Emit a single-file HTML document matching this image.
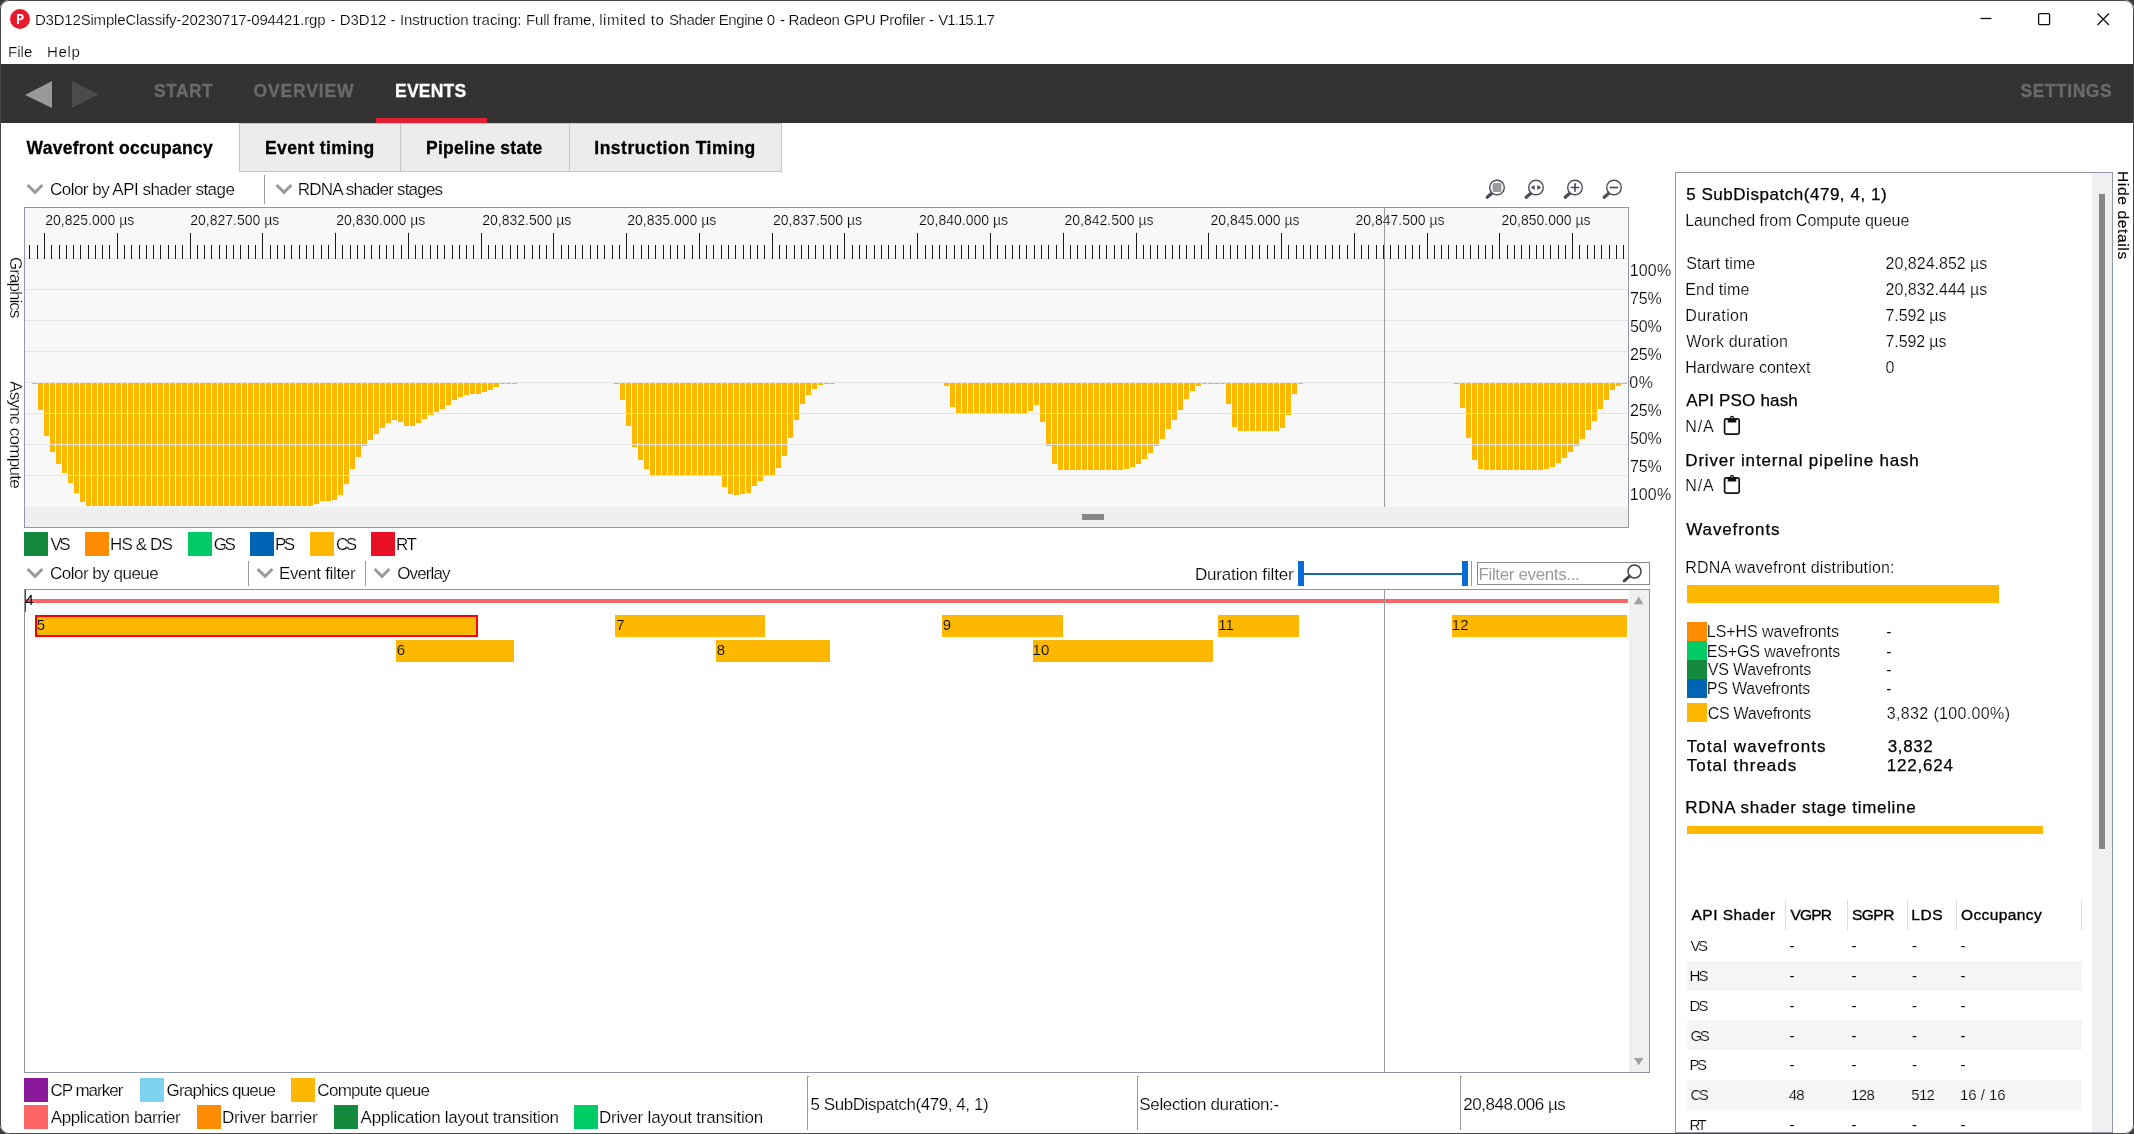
<!DOCTYPE html><html><head><meta charset="utf-8"><title>Radeon GPU Profiler</title><style>
html,body{margin:0;padding:0;}
body{width:2134px;height:1134px;overflow:hidden;background:#3a3a3a;font-family:"Liberation Sans",sans-serif;}
#win{position:absolute;left:0;top:0;width:2134px;height:1134px;background:#fff;border-radius:9px 9px 9px 9px;overflow:hidden;}
#win:after{content:"";position:absolute;left:0;top:0;right:0;bottom:0;border:1px solid #484848;border-radius:9px;pointer-events:none;z-index:50;}
.t{position:absolute;white-space:nowrap;line-height:normal;color:#000;}
#tx{position:absolute;left:0;top:0;width:2134px;height:1134px;will-change:transform;}
.b{position:absolute;}
.sq{position:absolute;width:24px;height:24px;}
.v{transform-origin:0 0;transform:rotate(90deg);}
</style></head><body><div id="win">
<svg class="b" style="left:9px;top:8px" width="22" height="22" viewBox="0 0 22 22"><circle cx="11" cy="11" r="10" fill="#e8192c"/><path d="M8 6h3.6a3.1 3.1 0 0 1 0 6.2H10V16H8z M10 7.8v2.6h1.4a1.3 1.3 0 0 0 0-2.6z" fill="#fff" fill-rule="evenodd"/></svg>
<svg class="b" style="left:1970px;top:4px" width="150" height="30" viewBox="0 0 150 30" fill="none" stroke="#111" stroke-width="1.3"><path d="M10.5 14.5h11"/><rect x="68.6" y="9.6" width="11" height="11" rx="1"/><path d="M127.5 9.5l11.5 11.5M139 9.5l-11.5 11.5"/></svg>
<div class="b" style="left:0;top:64px;width:2134px;height:59px;background:#333"></div>
<svg class="b" style="left:20px;top:76px" width="90" height="38" viewBox="0 0 90 38"><path d="M5 19L32 5v27z" fill="#999"/><path d="M78.5 18.5L52 5v27z" fill="#4b4b4b"/></svg>
<div class="b" style="left:376px;top:118px;width:111px;height:5px;background:#e0202f"></div>
<div class="b" style="left:239px;top:123px;width:543px;height:49px;background:#ececec;border:1px solid #c6c6c6;box-sizing:border-box"></div>
<div class="b" style="left:400px;top:123px;width:1px;height:49px;background:#c6c6c6"></div>
<div class="b" style="left:569px;top:123px;width:1px;height:49px;background:#c6c6c6"></div>
<svg class="b" style="left:26px;top:183px" width="18" height="13" viewBox="0 0 18 13"><path d="M1.6 2L9 9.4L16.4 2" fill="none" stroke="#9a9aa0" stroke-width="3"/></svg>
<svg class="b" style="left:274.5px;top:183px" width="18" height="13" viewBox="0 0 18 13"><path d="M1.6 2L9 9.4L16.4 2" fill="none" stroke="#9a9aa0" stroke-width="3"/></svg>
<div class="b" style="left:264px;top:175px;width:1px;height:29px;background:#9a9a9a"></div>
<svg class="b" style="left:1483.8px;top:176px" width="26" height="26" viewBox="0 0 26 26"><path d="M7.8 17.2L3.2 21.3" stroke="#4a4f5a" stroke-width="3.2" stroke-linecap="round" fill="none"/><circle cx="13" cy="11.5" r="7.3" fill="#fff" stroke="#4a4f5a" stroke-width="1.4"/><rect x="8.6" y="7.1" width="8.8" height="8.8" rx="1.5" fill="#9b9b9b"/></svg>
<svg class="b" style="left:1522.8px;top:176px" width="26" height="26" viewBox="0 0 26 26"><path d="M7.8 17.2L3.2 21.3" stroke="#4a4f5a" stroke-width="3.2" stroke-linecap="round" fill="none"/><circle cx="13" cy="11.5" r="7.3" fill="#fff" stroke="#4a4f5a" stroke-width="1.4"/><path d="M7.7 11.5l4-2.6v5.2zM18.3 11.5l-4-2.6v5.2z" fill="#4a4f5a"/></svg>
<svg class="b" style="left:1561.8px;top:176px" width="26" height="26" viewBox="0 0 26 26"><path d="M7.8 17.2L3.2 21.3" stroke="#4a4f5a" stroke-width="3.2" stroke-linecap="round" fill="none"/><circle cx="13" cy="11.5" r="7.3" fill="#fff" stroke="#4a4f5a" stroke-width="1.4"/><path d="M8.7 11.5h8.6M13 7.2v8.6" stroke="#4a4f5a" stroke-width="1.7" fill="none"/></svg>
<svg class="b" style="left:1600.7px;top:176px" width="26" height="26" viewBox="0 0 26 26"><path d="M7.8 17.2L3.2 21.3" stroke="#4a4f5a" stroke-width="3.2" stroke-linecap="round" fill="none"/><circle cx="13" cy="11.5" r="7.3" fill="#fff" stroke="#4a4f5a" stroke-width="1.4"/><path d="M8.7 11.5h8.6" stroke="#4a4f5a" stroke-width="1.7" fill="none"/></svg>
<div class="b" style="left:24px;top:207px;width:1605px;height:321px;box-sizing:border-box;border:1px solid #8f98a5;background:#f8f8f8"></div>
<div class="b" style="left:25px;top:507px;width:1603px;height:20px;background:#efefef"></div>
<div class="b" style="left:1082px;top:514px;width:22px;height:6px;background:#878787"></div>
<svg class="b" style="left:24px;top:207px" width="1605" height="320" viewBox="0 0 1605 320" shape-rendering="crispEdges"><path d="M8 176h5V177h-5zM14 176h5V203h-5zM20 176h5V229h-5zM26 176h5V245h-5zM32 176h5V257h-5zM38 176h5V266h-5zM44 176h5V276h-5zM50 176h5V286h-5zM56 176h5V295h-5zM62 176h5V299h-5zM68 176h5V299h-5zM74 176h5V299h-5zM80 176h5V299h-5zM86 176h5V299h-5zM92 176h5V299h-5zM98 176h5V299h-5zM104 176h5V299h-5zM110 176h5V299h-5zM116 176h5V299h-5zM122 176h5V299h-5zM128 176h5V299h-5zM134 176h5V299h-5zM140 176h5V299h-5zM146 176h5V299h-5zM152 176h5V299h-5zM158 176h5V299h-5zM164 176h5V299h-5zM170 176h5V299h-5zM176 176h5V299h-5zM182 176h5V299h-5zM188 176h5V299h-5zM194 176h5V299h-5zM200 176h5V299h-5zM206 176h5V299h-5zM212 176h5V299h-5zM218 176h5V299h-5zM224 176h5V299h-5zM230 176h5V299h-5zM236 176h5V299h-5zM242 176h5V299h-5zM248 176h5V299h-5zM254 176h5V299h-5zM260 176h5V299h-5zM266 176h5V299h-5zM272 176h5V299h-5zM278 176h5V299h-5zM284 176h5V299h-5zM290 176h5V297h-5zM296 176h5V294h-5zM302 176h5V294h-5zM308 176h5V293h-5zM314 176h5V288h-5zM320 176h5V277h-5zM326 176h5V262h-5zM332 176h5V250h-5zM338 176h5V239h-5zM344 176h5V233h-5zM350 176h5V227h-5zM356 176h5V221h-5zM362 176h5V216h-5zM368 176h5V213h-5zM374 176h5V215h-5zM380 176h5V219h-5zM386 176h5V219h-5zM392 176h5V216h-5zM398 176h5V212h-5zM404 176h5V208h-5zM410 176h5V205h-5zM416 176h5V202h-5zM422 176h5V198h-5zM428 176h5V193h-5zM434 176h5V190h-5zM440 176h5V188h-5zM446 176h5V187h-5zM452 176h5V187h-5zM458 176h5V185h-5zM464 176h5V183h-5zM470 176h5V180h-5zM476 176h5V177h-5zM482 176h5V177h-5zM488 176h5V177h-5zM590 176h5V177h-5zM596 176h5V193h-5zM602 176h5V219h-5zM608 176h5V240h-5zM614 176h5V253h-5zM620 176h5V262h-5zM626 176h5V268h-5zM632 176h5V268h-5zM638 176h5V268h-5zM644 176h5V268h-5zM650 176h5V268h-5zM656 176h5V268h-5zM662 176h5V268h-5zM668 176h5V268h-5zM674 176h5V268h-5zM680 176h5V268h-5zM686 176h5V268h-5zM692 176h5V268h-5zM698 176h5V280h-5zM704 176h5V287h-5zM710 176h5V288h-5zM716 176h5V287h-5zM722 176h5V286h-5zM728 176h5V279h-5zM734 176h5V274h-5zM740 176h5V268h-5zM746 176h5V268h-5zM752 176h5V261h-5zM758 176h5V249h-5zM764 176h5V231h-5zM770 176h5V213h-5zM776 176h5V197h-5zM782 176h5V188h-5zM788 176h5V182h-5zM794 176h5V178h-5zM800 176h5V177h-5zM806 176h5V177h-5zM920 176h5V179h-5zM926 176h5V200h-5zM932 176h5V206h-5zM938 176h5V206h-5zM944 176h5V206h-5zM950 176h5V206h-5zM956 176h5V206h-5zM962 176h5V206h-5zM968 176h5V206h-5zM974 176h5V206h-5zM980 176h5V206h-5zM986 176h5V206h-5zM992 176h5V206h-5zM998 176h5V206h-5zM1004 176h5V204h-5zM1010 176h5V198h-5zM1016 176h5V215h-5zM1022 176h5V239h-5zM1028 176h5V257h-5zM1034 176h5V263h-5zM1040 176h5V263h-5zM1046 176h5V263h-5zM1052 176h5V263h-5zM1058 176h5V263h-5zM1064 176h5V263h-5zM1070 176h5V263h-5zM1076 176h5V263h-5zM1082 176h5V263h-5zM1088 176h5V263h-5zM1094 176h5V263h-5zM1100 176h5V262h-5zM1106 176h5V260h-5zM1112 176h5V257h-5zM1118 176h5V252h-5zM1124 176h5V246h-5zM1130 176h5V239h-5zM1136 176h5V232h-5zM1142 176h5V222h-5zM1148 176h5V213h-5zM1154 176h5V203h-5zM1160 176h5V192h-5zM1166 176h5V184h-5zM1172 176h5V179h-5zM1178 176h5V177h-5zM1184 176h5V177h-5zM1190 176h5V177h-5zM1196 176h5V177h-5zM1202 176h5V197h-5zM1208 176h5V220h-5zM1214 176h5V224h-5zM1220 176h5V224h-5zM1226 176h5V224h-5zM1232 176h5V224h-5zM1238 176h5V224h-5zM1244 176h5V224h-5zM1250 176h5V224h-5zM1256 176h5V221h-5zM1262 176h5V208h-5zM1268 176h5V187h-5zM1274 176h5V177h-5zM1430 176h5V177h-5zM1436 176h5V201h-5zM1442 176h5V231h-5zM1448 176h5V253h-5zM1454 176h5V262h-5zM1460 176h5V263h-5zM1466 176h5V263h-5zM1472 176h5V263h-5zM1478 176h5V263h-5zM1484 176h5V263h-5zM1490 176h5V263h-5zM1496 176h5V263h-5zM1502 176h5V263h-5zM1508 176h5V263h-5zM1514 176h5V263h-5zM1520 176h5V262h-5zM1526 176h5V260h-5zM1532 176h5V256h-5zM1538 176h5V251h-5zM1544 176h5V245h-5zM1550 176h5V239h-5zM1556 176h5V232h-5zM1562 176h5V223h-5zM1568 176h5V214h-5zM1574 176h5V202h-5zM1580 176h5V193h-5zM1586 176h5V183h-5zM1592 176h5V179h-5zM1598 176h5V177h-5z" fill="#ffb800"/><path d="M1 51H1604v1H1zM1 82H1604v1H1zM1 113H1604v1H1zM1 144H1604v1H1zM1 175H1604v1H1zM1 206H1604v1H1zM1 237H1604v1H1zM1 268H1604v1H1z" fill="#e5e5e5"/><path d="M5 38h1v14h-1zM13 38h1v14h-1zM20 26h1v26h-1zM27 38h1v14h-1zM35 38h1v14h-1zM42 38h1v14h-1zM49 38h1v14h-1zM56 38h1v14h-1zM64 38h1v14h-1zM71 38h1v14h-1zM78 38h1v14h-1zM85 38h1v14h-1zM93 26h1v26h-1zM100 38h1v14h-1zM107 38h1v14h-1zM115 38h1v14h-1zM122 38h1v14h-1zM129 38h1v14h-1zM136 38h1v14h-1zM144 38h1v14h-1zM151 38h1v14h-1zM158 38h1v14h-1zM166 26h1v26h-1zM173 38h1v14h-1zM180 38h1v14h-1zM187 38h1v14h-1zM195 38h1v14h-1zM202 38h1v14h-1zM209 38h1v14h-1zM216 38h1v14h-1zM224 38h1v14h-1zM231 38h1v14h-1zM238 26h1v26h-1zM246 38h1v14h-1zM253 38h1v14h-1zM260 38h1v14h-1zM267 38h1v14h-1zM275 38h1v14h-1zM282 38h1v14h-1zM289 38h1v14h-1zM297 38h1v14h-1zM304 38h1v14h-1zM311 26h1v26h-1zM318 38h1v14h-1zM326 38h1v14h-1zM333 38h1v14h-1zM340 38h1v14h-1zM347 38h1v14h-1zM355 38h1v14h-1zM362 38h1v14h-1zM369 38h1v14h-1zM377 38h1v14h-1zM384 26h1v26h-1zM391 38h1v14h-1zM398 38h1v14h-1zM406 38h1v14h-1zM413 38h1v14h-1zM420 38h1v14h-1zM428 38h1v14h-1zM435 38h1v14h-1zM442 38h1v14h-1zM449 38h1v14h-1zM457 26h1v26h-1zM464 38h1v14h-1zM471 38h1v14h-1zM478 38h1v14h-1zM486 38h1v14h-1zM493 38h1v14h-1zM500 38h1v14h-1zM508 38h1v14h-1zM515 38h1v14h-1zM522 38h1v14h-1zM529 26h1v26h-1zM537 38h1v14h-1zM544 38h1v14h-1zM551 38h1v14h-1zM558 38h1v14h-1zM566 38h1v14h-1zM573 38h1v14h-1zM580 38h1v14h-1zM588 38h1v14h-1zM595 38h1v14h-1zM602 26h1v26h-1zM609 38h1v14h-1zM617 38h1v14h-1zM624 38h1v14h-1zM631 38h1v14h-1zM639 38h1v14h-1zM646 38h1v14h-1zM653 38h1v14h-1zM660 38h1v14h-1zM668 38h1v14h-1zM675 26h1v26h-1zM682 38h1v14h-1zM689 38h1v14h-1zM697 38h1v14h-1zM704 38h1v14h-1zM711 38h1v14h-1zM719 38h1v14h-1zM726 38h1v14h-1zM733 38h1v14h-1zM740 38h1v14h-1zM748 26h1v26h-1zM755 38h1v14h-1zM762 38h1v14h-1zM770 38h1v14h-1zM777 38h1v14h-1zM784 38h1v14h-1zM791 38h1v14h-1zM799 38h1v14h-1zM806 38h1v14h-1zM813 38h1v14h-1zM820 26h1v26h-1zM828 38h1v14h-1zM835 38h1v14h-1zM842 38h1v14h-1zM850 38h1v14h-1zM857 38h1v14h-1zM864 38h1v14h-1zM871 38h1v14h-1zM879 38h1v14h-1zM886 38h1v14h-1zM893 26h1v26h-1zM901 38h1v14h-1zM908 38h1v14h-1zM915 38h1v14h-1zM922 38h1v14h-1zM930 38h1v14h-1zM937 38h1v14h-1zM944 38h1v14h-1zM951 38h1v14h-1zM959 38h1v14h-1zM966 26h1v26h-1zM973 38h1v14h-1zM981 38h1v14h-1zM988 38h1v14h-1zM995 38h1v14h-1zM1002 38h1v14h-1zM1010 38h1v14h-1zM1017 38h1v14h-1zM1024 38h1v14h-1zM1032 38h1v14h-1zM1039 26h1v26h-1zM1046 38h1v14h-1zM1053 38h1v14h-1zM1061 38h1v14h-1zM1068 38h1v14h-1zM1075 38h1v14h-1zM1082 38h1v14h-1zM1090 38h1v14h-1zM1097 38h1v14h-1zM1104 38h1v14h-1zM1112 26h1v26h-1zM1119 38h1v14h-1zM1126 38h1v14h-1zM1133 38h1v14h-1zM1141 38h1v14h-1zM1148 38h1v14h-1zM1155 38h1v14h-1zM1162 38h1v14h-1zM1170 38h1v14h-1zM1177 38h1v14h-1zM1184 26h1v26h-1zM1192 38h1v14h-1zM1199 38h1v14h-1zM1206 38h1v14h-1zM1213 38h1v14h-1zM1221 38h1v14h-1zM1228 38h1v14h-1zM1235 38h1v14h-1zM1243 38h1v14h-1zM1250 38h1v14h-1zM1257 26h1v26h-1zM1264 38h1v14h-1zM1272 38h1v14h-1zM1279 38h1v14h-1zM1286 38h1v14h-1zM1293 38h1v14h-1zM1301 38h1v14h-1zM1308 38h1v14h-1zM1315 38h1v14h-1zM1323 38h1v14h-1zM1330 26h1v26h-1zM1337 38h1v14h-1zM1344 38h1v14h-1zM1352 38h1v14h-1zM1359 38h1v14h-1zM1366 38h1v14h-1zM1374 38h1v14h-1zM1381 38h1v14h-1zM1388 38h1v14h-1zM1395 38h1v14h-1zM1403 26h1v26h-1zM1410 38h1v14h-1zM1417 38h1v14h-1zM1424 38h1v14h-1zM1432 38h1v14h-1zM1439 38h1v14h-1zM1446 38h1v14h-1zM1454 38h1v14h-1zM1461 38h1v14h-1zM1468 38h1v14h-1zM1475 26h1v26h-1zM1483 38h1v14h-1zM1490 38h1v14h-1zM1497 38h1v14h-1zM1505 38h1v14h-1zM1512 38h1v14h-1zM1519 38h1v14h-1zM1526 38h1v14h-1zM1534 38h1v14h-1zM1541 38h1v14h-1zM1548 26h1v26h-1zM1555 38h1v14h-1zM1563 38h1v14h-1zM1570 38h1v14h-1zM1577 38h1v14h-1zM1585 38h1v14h-1zM1592 38h1v14h-1zM1599 38h1v14h-1z" fill="#1a1a1a"/><rect x="1360" y="1" width="1" height="299" fill="#999"/></svg>
<div class="sq" style="left:24px;top:532px;background:#158a3e"></div>
<div class="sq" style="left:85px;top:532px;background:#ff8c00"></div>
<div class="sq" style="left:188px;top:532px;background:#00cc66"></div>
<div class="sq" style="left:250px;top:532px;background:#0064b4"></div>
<div class="sq" style="left:310px;top:532px;background:#ffb800"></div>
<div class="sq" style="left:371px;top:532px;background:#e81123"></div>
<svg class="b" style="left:26px;top:567px" width="18" height="13" viewBox="0 0 18 13"><path d="M1.6 2L9 9.4L16.4 2" fill="none" stroke="#9a9aa0" stroke-width="3"/></svg>
<svg class="b" style="left:256px;top:567px" width="18" height="13" viewBox="0 0 18 13"><path d="M1.6 2L9 9.4L16.4 2" fill="none" stroke="#9a9aa0" stroke-width="3"/></svg>
<svg class="b" style="left:372.5px;top:567px" width="18" height="13" viewBox="0 0 18 13"><path d="M1.6 2L9 9.4L16.4 2" fill="none" stroke="#9a9aa0" stroke-width="3"/></svg>
<div class="b" style="left:248px;top:561px;width:1px;height:25px;background:#9a9a9a"></div>
<div class="b" style="left:365px;top:561px;width:1px;height:25px;background:#9a9a9a"></div>
<div class="b" style="left:1298px;top:561px;width:6px;height:25px;background:#0a6ad6"></div>
<div class="b" style="left:1462px;top:561px;width:6px;height:25px;background:#0a6ad6"></div>
<div class="b" style="left:1304px;top:572.5px;width:158px;height:2px;background:#1565c0"></div>
<div class="b" style="left:1471px;top:561px;width:1px;height:25px;background:#9a9a9a"></div>
<div class="b" style="left:1477px;top:562px;width:173px;height:23px;box-sizing:border-box;border:1px solid #8a8a8a;background:#fff"></div>
<svg class="b" style="left:1620px;top:562px" width="26" height="24" viewBox="0 0 26 24"><circle cx="14.5" cy="9.5" r="6.5" fill="none" stroke="#444" stroke-width="1.5"/><path d="M9.6 14.2L4.2 18.9" stroke="#444" stroke-width="3" stroke-linecap="round"/></svg>
<div class="b" style="left:24px;top:589px;width:1626px;height:484px;box-sizing:border-box;border:1px solid #8c949e;background:#fff"></div>
<div class="b" style="left:1629px;top:590px;width:20px;height:482px;background:#f0f0f0"></div>
<svg class="b" style="left:1629px;top:590px" width="20" height="481" viewBox="0 0 20 481"><path d="M5 14.3h9.4l-4.7-7.7z M5 468h9.4l-4.7 7.2z" fill="#a0a0a0"/></svg>
<div class="b" style="left:25px;top:599px;width:1603px;height:4px;background:#ff6464"></div>
<div class="b" style="left:25px;top:590px;width:1px;height:22px;background:#8a1a9b"></div>
<div class="b" style="left:35px;top:615px;width:443px;height:22px;background:#ffb800;box-sizing:border-box;border:2px solid #ff0000;"></div>
<div class="b" style="left:615px;top:615px;width:150px;height:22px;background:#ffb800;"></div>
<div class="b" style="left:942px;top:615px;width:121px;height:22px;background:#ffb800;"></div>
<div class="b" style="left:1218px;top:615px;width:81px;height:22px;background:#ffb800;"></div>
<div class="b" style="left:1452px;top:615px;width:175px;height:22px;background:#ffb800;"></div>
<div class="b" style="left:396px;top:640px;width:118px;height:22px;background:#ffb800;"></div>
<div class="b" style="left:716px;top:640px;width:114px;height:22px;background:#ffb800;"></div>
<div class="b" style="left:1033px;top:640px;width:180px;height:22px;background:#ffb800;"></div>
<div class="b" style="left:1384px;top:590px;width:1px;height:482px;background:#9a9a9a"></div>
<div class="sq" style="left:24px;top:1078px;background:#8a1a9b"></div>
<div class="sq" style="left:140px;top:1078px;background:#7dd3f0"></div>
<div class="sq" style="left:291px;top:1078px;background:#ffb800"></div>
<div class="sq" style="left:24px;top:1105px;background:#ff6464"></div>
<div class="sq" style="left:197px;top:1105px;background:#ff8c00"></div>
<div class="sq" style="left:334px;top:1105px;background:#158a3e"></div>
<div class="sq" style="left:574px;top:1105px;background:#00cc66"></div>
<div class="b" style="left:807px;top:1076px;width:1px;height:54px;background:#9a9a9a"></div>
<div class="b" style="left:807px;top:1076px;width:2px;height:1px;background:#9a9a9a"></div>
<div class="b" style="left:1137px;top:1076px;width:1px;height:54px;background:#9a9a9a"></div>
<div class="b" style="left:1137px;top:1076px;width:2px;height:1px;background:#9a9a9a"></div>
<div class="b" style="left:1460px;top:1076px;width:1px;height:54px;background:#9a9a9a"></div>
<div class="b" style="left:1460px;top:1076px;width:2px;height:1px;background:#9a9a9a"></div>
<div class="b" style="left:1675px;top:172px;width:438px;height:961px;box-sizing:border-box;border:1px solid #8f98a5;background:#fff"></div>
<div class="b" style="left:2092px;top:173px;width:20px;height:959px;background:#f0f0f0"></div>
<div class="b" style="left:2099px;top:194px;width:6px;height:655px;background:#878787"></div>
<svg class="b" style="left:1723px;top:414.5px" width="18" height="21" viewBox="0 0 18 21"><rect x="1.6" y="3.8" width="14.6" height="15.4" rx="1.6" fill="none" stroke="#111" stroke-width="1.7"/><path d="M4.7 4h8.6v3.6H4.7z M7.1 4.3V2.6a1.9 1.9 0 0 1 3.8 0V4.3z" fill="#111"/><circle cx="9" cy="2.8" r="0.7" fill="#fff"/></svg>
<svg class="b" style="left:1723px;top:473.8px" width="18" height="21" viewBox="0 0 18 21"><rect x="1.6" y="3.8" width="14.6" height="15.4" rx="1.6" fill="none" stroke="#111" stroke-width="1.7"/><path d="M4.7 4h8.6v3.6H4.7z M7.1 4.3V2.6a1.9 1.9 0 0 1 3.8 0V4.3z" fill="#111"/><circle cx="9" cy="2.8" r="0.7" fill="#fff"/></svg>
<div class="b" style="left:1687px;top:585px;width:312px;height:18px;background:#ffb800"></div>
<div class="b" style="left:1687px;top:622px;width:20px;height:19px;background:#ff8c00"></div>
<div class="b" style="left:1687px;top:641px;width:20px;height:19px;background:#00cc66"></div>
<div class="b" style="left:1687px;top:660px;width:20px;height:19px;background:#158a3e"></div>
<div class="b" style="left:1687px;top:679px;width:20px;height:19px;background:#0064b4"></div>
<div class="b" style="left:1687px;top:703px;width:20px;height:19px;background:#ffb800"></div>
<div class="b" style="left:1687px;top:826px;width:356px;height:8px;background:#ffb800"></div>
<div class="b" style="left:1785px;top:900px;width:1px;height:30px;background:#dcdcdc"></div>
<div class="b" style="left:1847px;top:900px;width:1px;height:30px;background:#dcdcdc"></div>
<div class="b" style="left:1907px;top:900px;width:1px;height:30px;background:#dcdcdc"></div>
<div class="b" style="left:1956px;top:900px;width:1px;height:30px;background:#dcdcdc"></div>
<div class="b" style="left:2081px;top:900px;width:1px;height:30px;background:#dcdcdc"></div>
<div class="b" style="left:1687px;top:961px;width:395px;height:30px;background:#f5f5f5"></div>
<div class="b" style="left:1687px;top:1020px;width:395px;height:30px;background:#f5f5f5"></div>
<div class="b" style="left:1687px;top:1080px;width:395px;height:30px;background:#f5f5f5"></div>
<div id="tx">
<span class="t" style="left:34.90px;top:10.60px;font-size:15px;letter-spacing:-0.185px;-webkit-text-stroke:0.2px #fff;">D3D12SimpleClassify-20230717-094421.rgp</span>
<span class="t" style="left:330.60px;top:10.60px;font-size:15px;letter-spacing:-0.015px;-webkit-text-stroke:0.2px #fff;">- D3D12 -</span>
<span class="t" style="left:399.90px;top:10.60px;font-size:15px;letter-spacing:-0.057px;-webkit-text-stroke:0.2px #fff;">Instruction tracing:</span>
<span class="t" style="left:525.90px;top:10.60px;font-size:15px;letter-spacing:-0.128px;-webkit-text-stroke:0.2px #fff;">Full frame,</span>
<span class="t" style="left:599.20px;top:10.60px;font-size:15px;letter-spacing:0.513px;-webkit-text-stroke:0.2px #fff;">limited to</span>
<span class="t" style="left:668.90px;top:10.60px;font-size:15px;letter-spacing:-0.394px;-webkit-text-stroke:0.2px #fff;">Shader Engine 0</span>
<span class="t" style="left:779.90px;top:10.60px;font-size:15px;letter-spacing:-0.233px;-webkit-text-stroke:0.2px #fff;">- Radeon GPU Profiler -</span>
<span class="t" style="left:938.30px;top:10.60px;font-size:15px;letter-spacing:-0.960px;-webkit-text-stroke:0.2px #fff;">V1.15.1.7</span>
<span class="t" style="left:8.00px;top:42.70px;font-size:15px;letter-spacing:0.057px;-webkit-text-stroke:0.2px #fff;">File</span>
<span class="t" style="left:47.00px;top:42.70px;font-size:15px;letter-spacing:0.664px;-webkit-text-stroke:0.2px #fff;">Help</span>
<span class="t" style="left:154.00px;top:81.40px;font-size:17.5px;letter-spacing:0.415px;font-weight:700;color:#6a6a6a;-webkit-text-stroke:0.3px #6a6a6a;">START</span>
<span class="t" style="left:253.50px;top:81.40px;font-size:17.5px;letter-spacing:0.859px;font-weight:700;color:#6a6a6a;-webkit-text-stroke:0.3px #6a6a6a;">OVERVIEW</span>
<span class="t" style="left:395.00px;top:81.40px;font-size:17.5px;letter-spacing:0.231px;font-weight:700;color:#fff;-webkit-text-stroke:0.3px #fff;">EVENTS</span>
<span class="t" style="left:2020.50px;top:81.40px;font-size:17.5px;letter-spacing:0.523px;font-weight:700;color:#6a6a6a;-webkit-text-stroke:0.3px #6a6a6a;">SETTINGS</span>
<span class="t" style="left:26.60px;top:138.40px;font-size:17.5px;letter-spacing:0.269px;font-weight:700;-webkit-text-stroke:0.3px #000;">Wavefront occupancy</span>
<span class="t" style="left:265.00px;top:138.40px;font-size:17.5px;letter-spacing:0.389px;font-weight:700;-webkit-text-stroke:0.3px #000;">Event timing</span>
<span class="t" style="left:426.00px;top:138.40px;font-size:17.5px;letter-spacing:0.263px;font-weight:700;-webkit-text-stroke:0.3px #000;">Pipeline state</span>
<span class="t" style="left:594.30px;top:138.40px;font-size:17.5px;letter-spacing:0.510px;font-weight:700;-webkit-text-stroke:0.3px #000;">Instruction Timing</span>
<span class="t" style="left:50.00px;top:179.90px;font-size:17px;letter-spacing:-0.524px;-webkit-text-stroke:0.2px #fff;">Color by API shader stage</span>
<span class="t" style="left:297.80px;top:179.90px;font-size:17px;letter-spacing:-0.793px;-webkit-text-stroke:0.2px #fff;">RDNA shader stages</span>
<span class="t" style="left:45.30px;top:211.70px;font-size:14px;-webkit-text-stroke:0.2px #f8f8f8;">20,825.000 µs</span>
<span class="t" style="left:190.20px;top:211.70px;font-size:14px;-webkit-text-stroke:0.2px #f8f8f8;">20,827.500 µs</span>
<span class="t" style="left:336.20px;top:211.70px;font-size:14px;-webkit-text-stroke:0.2px #f8f8f8;">20,830.000 µs</span>
<span class="t" style="left:482.20px;top:211.70px;font-size:14px;-webkit-text-stroke:0.2px #f8f8f8;">20,832.500 µs</span>
<span class="t" style="left:627.20px;top:211.70px;font-size:14px;-webkit-text-stroke:0.2px #f8f8f8;">20,835.000 µs</span>
<span class="t" style="left:773.00px;top:211.70px;font-size:14px;-webkit-text-stroke:0.2px #f8f8f8;">20,837.500 µs</span>
<span class="t" style="left:919.00px;top:211.70px;font-size:14px;-webkit-text-stroke:0.2px #f8f8f8;">20,840.000 µs</span>
<span class="t" style="left:1064.50px;top:211.70px;font-size:14px;-webkit-text-stroke:0.2px #f8f8f8;">20,842.500 µs</span>
<span class="t" style="left:1210.50px;top:211.70px;font-size:14px;-webkit-text-stroke:0.2px #f8f8f8;">20,845.000 µs</span>
<span class="t" style="left:1355.50px;top:211.70px;font-size:14px;-webkit-text-stroke:0.2px #f8f8f8;">20,847.500 µs</span>
<span class="t" style="left:1501.50px;top:211.70px;font-size:14px;-webkit-text-stroke:0.2px #f8f8f8;">20,850.000 µs</span>
<span class="t" style="left:1629.70px;top:261.60px;font-size:16px;letter-spacing:0.168px;-webkit-text-stroke:0.2px #fff;">100%</span>
<span class="t" style="left:1629.90px;top:289.60px;font-size:16px;letter-spacing:-0.098px;-webkit-text-stroke:0.2px #fff;">75%</span>
<span class="t" style="left:1629.90px;top:317.60px;font-size:16px;letter-spacing:-0.098px;-webkit-text-stroke:0.2px #fff;">50%</span>
<span class="t" style="left:1629.90px;top:345.60px;font-size:16px;letter-spacing:-0.098px;-webkit-text-stroke:0.2px #fff;">25%</span>
<span class="t" style="left:1629.20px;top:373.60px;font-size:16px;letter-spacing:0.702px;-webkit-text-stroke:0.2px #fff;">0%</span>
<span class="t" style="left:1629.90px;top:401.60px;font-size:16px;letter-spacing:-0.098px;-webkit-text-stroke:0.2px #fff;">25%</span>
<span class="t" style="left:1629.90px;top:429.60px;font-size:16px;letter-spacing:-0.098px;-webkit-text-stroke:0.2px #fff;">50%</span>
<span class="t" style="left:1629.90px;top:457.60px;font-size:16px;letter-spacing:-0.098px;-webkit-text-stroke:0.2px #fff;">75%</span>
<span class="t" style="left:1629.70px;top:485.60px;font-size:16px;letter-spacing:0.168px;-webkit-text-stroke:0.2px #fff;">100%</span>
<span class="t" style="left:50.40px;top:535.30px;font-size:17px;letter-spacing:-2.600px;-webkit-text-stroke:0.2px #fff;">VS</span>
<span class="t" style="left:110.00px;top:535.30px;font-size:17px;letter-spacing:-0.880px;-webkit-text-stroke:0.2px #fff;">HS &amp; DS</span>
<span class="t" style="left:213.80px;top:535.30px;font-size:17px;letter-spacing:-2.600px;-webkit-text-stroke:0.2px #fff;">GS</span>
<span class="t" style="left:275.00px;top:535.30px;font-size:17px;letter-spacing:-2.600px;-webkit-text-stroke:0.2px #fff;">PS</span>
<span class="t" style="left:336.00px;top:535.30px;font-size:17px;letter-spacing:-2.600px;-webkit-text-stroke:0.2px #fff;">CS</span>
<span class="t" style="left:396.00px;top:535.30px;font-size:17px;letter-spacing:-1.470px;-webkit-text-stroke:0.2px #fff;">RT</span>
<span class="t" style="left:50.00px;top:564.30px;font-size:17px;letter-spacing:-0.503px;-webkit-text-stroke:0.2px #fff;">Color by queue</span>
<span class="t" style="left:278.90px;top:564.30px;font-size:17px;letter-spacing:-0.323px;-webkit-text-stroke:0.2px #fff;">Event filter</span>
<span class="t" style="left:397.20px;top:564.30px;font-size:17px;letter-spacing:-0.878px;-webkit-text-stroke:0.2px #fff;">Overlay</span>
<span class="t" style="left:1194.90px;top:564.80px;font-size:17px;letter-spacing:-0.167px;-webkit-text-stroke:0.2px #fff;">Duration filter</span>
<span class="t" style="left:1478.50px;top:564.80px;font-size:17px;letter-spacing:-0.369px;color:#9a9a9a;">Filter events...</span>
<span class="t" style="left:25.20px;top:590.90px;font-size:15px;">4</span>
<span class="t" style="left:36.70px;top:616.00px;font-size:15px;-webkit-text-stroke:0.2px #ffb800;">5</span>
<span class="t" style="left:616.30px;top:616.00px;font-size:15px;-webkit-text-stroke:0.2px #ffb800;">7</span>
<span class="t" style="left:942.80px;top:616.00px;font-size:15px;-webkit-text-stroke:0.2px #ffb800;">9</span>
<span class="t" style="left:1218.30px;top:616.00px;font-size:15px;-webkit-text-stroke:0.2px #ffb800;">11</span>
<span class="t" style="left:1451.80px;top:616.00px;font-size:15px;-webkit-text-stroke:0.2px #ffb800;">12</span>
<span class="t" style="left:396.70px;top:641.00px;font-size:15px;-webkit-text-stroke:0.2px #ffb800;">6</span>
<span class="t" style="left:716.80px;top:641.00px;font-size:15px;-webkit-text-stroke:0.2px #ffb800;">8</span>
<span class="t" style="left:1032.60px;top:641.00px;font-size:15px;-webkit-text-stroke:0.2px #ffb800;">10</span>
<span class="t" style="left:50.40px;top:1081.30px;font-size:17px;letter-spacing:-0.996px;-webkit-text-stroke:0.2px #fff;">CP marker</span>
<span class="t" style="left:166.50px;top:1081.30px;font-size:17px;letter-spacing:-0.805px;-webkit-text-stroke:0.2px #fff;">Graphics queue</span>
<span class="t" style="left:317.30px;top:1081.30px;font-size:17px;letter-spacing:-0.693px;-webkit-text-stroke:0.2px #fff;">Compute queue</span>
<span class="t" style="left:50.80px;top:1108.30px;font-size:17px;letter-spacing:-0.397px;-webkit-text-stroke:0.2px #fff;">Application barrier</span>
<span class="t" style="left:222.00px;top:1108.30px;font-size:17px;letter-spacing:-0.271px;-webkit-text-stroke:0.2px #fff;">Driver barrier</span>
<span class="t" style="left:360.60px;top:1108.30px;font-size:17px;letter-spacing:-0.304px;-webkit-text-stroke:0.2px #fff;">Application layout transition</span>
<span class="t" style="left:599.00px;top:1108.30px;font-size:17px;letter-spacing:-0.212px;-webkit-text-stroke:0.2px #fff;">Driver layout transition</span>
<span class="t" style="left:810.40px;top:1095.00px;font-size:17px;letter-spacing:-0.426px;-webkit-text-stroke:0.2px #fff;">5 SubDispatch(479, 4, 1)</span>
<span class="t" style="left:1139.30px;top:1094.50px;font-size:17px;letter-spacing:-0.348px;-webkit-text-stroke:0.2px #fff;">Selection duration:-</span>
<span class="t" style="left:1463.30px;top:1094.50px;font-size:17px;letter-spacing:-0.467px;-webkit-text-stroke:0.2px #fff;">20,848.006 µs</span>
<span class="t" style="left:1686.20px;top:184.80px;font-size:17px;letter-spacing:0.535px;-webkit-text-stroke:0.25px #000;">5 SubDispatch(479, 4, 1)</span>
<span class="t" style="left:1685.20px;top:211.70px;font-size:16px;letter-spacing:-0.036px;-webkit-text-stroke:0.2px #fff;">Launched from Compute queue</span>
<span class="t" style="left:1686.30px;top:254.80px;font-size:16px;letter-spacing:0.049px;-webkit-text-stroke:0.2px #fff;">Start time</span>
<span class="t" style="left:1885.60px;top:254.80px;font-size:16px;-webkit-text-stroke:0.2px #fff;">20,824.852 µs</span>
<span class="t" style="left:1685.30px;top:280.77px;font-size:16px;letter-spacing:0.137px;-webkit-text-stroke:0.2px #fff;">End time</span>
<span class="t" style="left:1885.60px;top:280.77px;font-size:16px;-webkit-text-stroke:0.2px #fff;">20,832.444 µs</span>
<span class="t" style="left:1685.30px;top:306.74px;font-size:16px;letter-spacing:0.346px;-webkit-text-stroke:0.2px #fff;">Duration</span>
<span class="t" style="left:1885.60px;top:306.74px;font-size:16px;letter-spacing:-0.129px;-webkit-text-stroke:0.2px #fff;">7.592 µs</span>
<span class="t" style="left:1686.30px;top:332.71px;font-size:16px;letter-spacing:0.191px;-webkit-text-stroke:0.2px #fff;">Work duration</span>
<span class="t" style="left:1885.60px;top:332.71px;font-size:16px;letter-spacing:-0.129px;-webkit-text-stroke:0.2px #fff;">7.592 µs</span>
<span class="t" style="left:1685.30px;top:358.68px;font-size:16px;letter-spacing:-0.016px;-webkit-text-stroke:0.2px #fff;">Hardware context</span>
<span class="t" style="left:1885.60px;top:358.68px;font-size:16px;-webkit-text-stroke:0.2px #fff;">0</span>
<span class="t" style="left:1686.30px;top:390.80px;font-size:17px;letter-spacing:0.168px;-webkit-text-stroke:0.25px #000;">API PSO hash</span>
<span class="t" style="left:1685.30px;top:418.20px;font-size:16px;letter-spacing:0.850px;-webkit-text-stroke:0.2px #fff;">N/A</span>
<span class="t" style="left:1685.30px;top:450.80px;font-size:17px;letter-spacing:0.812px;-webkit-text-stroke:0.25px #000;">Driver internal pipeline hash</span>
<span class="t" style="left:1685.30px;top:477.00px;font-size:16px;letter-spacing:0.850px;-webkit-text-stroke:0.2px #fff;">N/A</span>
<span class="t" style="left:1686.30px;top:519.60px;font-size:17px;letter-spacing:0.873px;-webkit-text-stroke:0.25px #000;">Wavefronts</span>
<span class="t" style="left:1685.30px;top:558.50px;font-size:16px;letter-spacing:0.175px;-webkit-text-stroke:0.2px #fff;">RDNA wavefront distribution:</span>
<span class="t" style="left:1706.80px;top:623.30px;font-size:16px;letter-spacing:-0.050px;-webkit-text-stroke:0.2px #fff;">LS+HS wavefronts</span>
<span class="t" style="left:1706.80px;top:642.50px;font-size:16px;letter-spacing:-0.148px;-webkit-text-stroke:0.2px #fff;">ES+GS wavefronts</span>
<span class="t" style="left:1707.80px;top:661.30px;font-size:16px;letter-spacing:-0.226px;-webkit-text-stroke:0.2px #fff;">VS Wavefronts</span>
<span class="t" style="left:1706.80px;top:680.40px;font-size:16px;letter-spacing:-0.217px;-webkit-text-stroke:0.2px #fff;">PS Wavefronts</span>
<span class="t" style="left:1707.80px;top:704.50px;font-size:16px;letter-spacing:-0.299px;-webkit-text-stroke:0.2px #fff;">CS Wavefronts</span>
<span class="t" style="left:1886.20px;top:623.30px;font-size:16px;-webkit-text-stroke:0.2px #fff;">-</span>
<span class="t" style="left:1886.20px;top:642.50px;font-size:16px;-webkit-text-stroke:0.2px #fff;">-</span>
<span class="t" style="left:1886.20px;top:661.30px;font-size:16px;-webkit-text-stroke:0.2px #fff;">-</span>
<span class="t" style="left:1886.20px;top:680.40px;font-size:16px;-webkit-text-stroke:0.2px #fff;">-</span>
<span class="t" style="left:1886.80px;top:704.50px;font-size:16px;letter-spacing:0.352px;-webkit-text-stroke:0.2px #fff;">3,832 (100.00%)</span>
<span class="t" style="left:1686.80px;top:736.50px;font-size:17px;letter-spacing:1.064px;-webkit-text-stroke:0.25px #000;">Total wavefronts</span>
<span class="t" style="left:1887.80px;top:736.50px;font-size:17px;letter-spacing:0.578px;-webkit-text-stroke:0.25px #000;">3,832</span>
<span class="t" style="left:1686.80px;top:755.60px;font-size:17px;letter-spacing:1.014px;-webkit-text-stroke:0.25px #000;">Total threads</span>
<span class="t" style="left:1886.80px;top:755.60px;font-size:17px;letter-spacing:0.801px;-webkit-text-stroke:0.25px #000;">122,624</span>
<span class="t" style="left:1685.30px;top:798.20px;font-size:17px;letter-spacing:0.671px;-webkit-text-stroke:0.25px #000;">RDNA shader stage timeline</span>
<span class="t" style="left:1691.50px;top:906.20px;font-size:15.5px;letter-spacing:0.477px;-webkit-text-stroke:0.35px #000;">API Shader</span>
<span class="t" style="left:1790.50px;top:906.20px;font-size:15.5px;letter-spacing:-0.811px;-webkit-text-stroke:0.35px #000;">VGPR</span>
<span class="t" style="left:1852.00px;top:906.20px;font-size:15.5px;letter-spacing:-0.511px;-webkit-text-stroke:0.35px #000;">SGPR</span>
<span class="t" style="left:1911.20px;top:906.20px;font-size:15.5px;letter-spacing:0.593px;-webkit-text-stroke:0.35px #000;">LDS</span>
<span class="t" style="left:1961.00px;top:906.20px;font-size:15.5px;letter-spacing:0.402px;-webkit-text-stroke:0.35px #000;">Occupancy</span>
<span class="t" style="left:1690.60px;top:936.80px;font-size:15px;letter-spacing:-2.600px;-webkit-text-stroke:0.2px #fff;">VS</span>
<span class="t" style="left:1789.60px;top:936.80px;font-size:15px;">-</span>
<span class="t" style="left:1851.50px;top:936.80px;font-size:15px;">-</span>
<span class="t" style="left:1911.90px;top:936.80px;font-size:15px;">-</span>
<span class="t" style="left:1960.50px;top:936.80px;font-size:15px;">-</span>
<span class="t" style="left:1689.60px;top:966.70px;font-size:15px;letter-spacing:-1.833px;-webkit-text-stroke:0.2px #f5f5f5;">HS</span>
<span class="t" style="left:1789.60px;top:966.70px;font-size:15px;">-</span>
<span class="t" style="left:1851.50px;top:966.70px;font-size:15px;">-</span>
<span class="t" style="left:1911.90px;top:966.70px;font-size:15px;">-</span>
<span class="t" style="left:1960.50px;top:966.70px;font-size:15px;">-</span>
<span class="t" style="left:1689.60px;top:996.60px;font-size:15px;letter-spacing:-1.833px;-webkit-text-stroke:0.2px #fff;">DS</span>
<span class="t" style="left:1789.60px;top:996.60px;font-size:15px;">-</span>
<span class="t" style="left:1851.50px;top:996.60px;font-size:15px;">-</span>
<span class="t" style="left:1911.90px;top:996.60px;font-size:15px;">-</span>
<span class="t" style="left:1960.50px;top:996.60px;font-size:15px;">-</span>
<span class="t" style="left:1690.60px;top:1026.50px;font-size:15px;letter-spacing:-2.600px;-webkit-text-stroke:0.2px #f5f5f5;">GS</span>
<span class="t" style="left:1789.60px;top:1026.50px;font-size:15px;">-</span>
<span class="t" style="left:1851.50px;top:1026.50px;font-size:15px;">-</span>
<span class="t" style="left:1911.90px;top:1026.50px;font-size:15px;">-</span>
<span class="t" style="left:1960.50px;top:1026.50px;font-size:15px;">-</span>
<span class="t" style="left:1689.60px;top:1056.40px;font-size:15px;letter-spacing:-2.600px;-webkit-text-stroke:0.2px #fff;">PS</span>
<span class="t" style="left:1789.60px;top:1056.40px;font-size:15px;">-</span>
<span class="t" style="left:1851.50px;top:1056.40px;font-size:15px;">-</span>
<span class="t" style="left:1911.90px;top:1056.40px;font-size:15px;">-</span>
<span class="t" style="left:1960.50px;top:1056.40px;font-size:15px;">-</span>
<span class="t" style="left:1690.60px;top:1086.30px;font-size:15px;letter-spacing:-2.600px;-webkit-text-stroke:0.2px #f5f5f5;">CS</span>
<span class="t" style="left:1788.70px;top:1086.30px;font-size:15px;letter-spacing:-0.742px;-webkit-text-stroke:0.2px #f5f5f5;">48</span>
<span class="t" style="left:1851.00px;top:1086.30px;font-size:15px;letter-spacing:-0.592px;-webkit-text-stroke:0.2px #f5f5f5;">128</span>
<span class="t" style="left:1911.30px;top:1086.30px;font-size:15px;letter-spacing:-0.692px;-webkit-text-stroke:0.2px #f5f5f5;">512</span>
<span class="t" style="left:1960.00px;top:1086.30px;font-size:15px;letter-spacing:-0.038px;-webkit-text-stroke:0.2px #f5f5f5;">16 / 16</span>
<span class="t" style="left:1689.60px;top:1116.20px;font-size:15px;letter-spacing:-2.600px;-webkit-text-stroke:0.2px #fff;">RT</span>
<span class="t" style="left:1789.60px;top:1116.20px;font-size:15px;">-</span>
<span class="t" style="left:1851.50px;top:1116.20px;font-size:15px;">-</span>
<span class="t" style="left:1911.90px;top:1116.20px;font-size:15px;">-</span>
<span class="t" style="left:1960.50px;top:1116.20px;font-size:15px;">-</span>
<span class="t v" style="left:24.50px;top:256.70px;font-size:17px;letter-spacing:-0.961px;-webkit-text-stroke:0.2px #fff;">Graphics</span>
<span class="t v" style="left:24.70px;top:380.90px;font-size:17px;letter-spacing:-0.705px;-webkit-text-stroke:0.2px #fff;">Async compute</span>
<span class="t v" style="left:2132.20px;top:171.30px;font-size:15.5px;letter-spacing:0.651px;-webkit-text-stroke:0.15px #000;">Hide details</span>
</div>
</div></body></html>
